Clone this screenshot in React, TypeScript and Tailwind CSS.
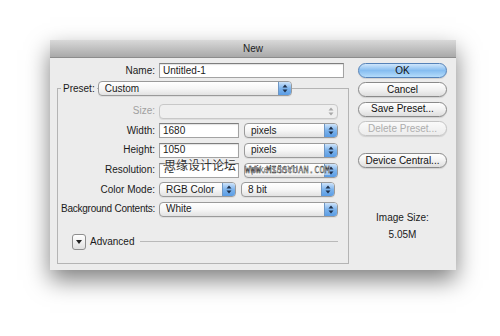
import { ReactNode } from "react";

// Photoshop "New" document dialog, Aqua style

function Arrows({ disabled = false }: { disabled?: boolean }) {
  const fill = disabled ? "#a8a8a8" : "#1d2f4a";
  return (
    <svg width="6" height="9" viewBox="0 0 6 9">
      <path d="M3 0.5 L5.5 3.5 H0.5 Z" fill={fill} />
      <path d="M3 8.5 L5.5 5.5 H0.5 Z" fill={fill} />
    </svg>
  );
}

function Select({ value, width, disabled = false }: { value: string; width: string; disabled?: boolean }) {
  return (
    <div
      className={`flex h-[15px] ${width} overflow-hidden rounded-[4px] border ${
        disabled ? "border-[#c8c8c8] bg-[#efefef]" : "border-[#9a9a9a] bg-linear-to-b from-white via-[#f6f6f6] to-[#e2e2e2]"
      } shadow-[0_1px_0_rgba(0,0,0,0.06)]`}
    >
      <div className="flex flex-1 items-center whitespace-nowrap pl-[6px] leading-none text-[#1a1a1a]">{value}</div>
      <div
        className={`flex w-[13px] items-center justify-center ${
          disabled ? "" : "border-l border-[#6d96c4] bg-linear-to-b from-[#cfe4fa] via-[#7cb3ec] to-[#5a9ce4]"
        }`}
      >
        <Arrows disabled={disabled} />
      </div>
    </div>
  );
}

function Input({ value, width }: { value: string; width: string }) {
  return (
    <div
      className={`flex h-[15px] ${width} items-center border border-[#a3a3a3] border-t-[#7e7e7e] bg-white pl-[3px] leading-none shadow-[inset_0_1px_1px_rgba(0,0,0,0.12)]`}
    >
      {value}
    </div>
  );
}

function Row({ label, children, muted = false, tight = false }: { label: string; children: ReactNode; muted?: boolean; tight?: boolean }) {
  return (
    <div className="flex h-[15px] items-center">
      <div
        className={`flex w-[101px] justify-end whitespace-nowrap pr-[4px] leading-none ${muted ? "text-[#a0a0a0]" : ""} ${
          tight ? "tracking-[-0.25px]" : ""
        }`}
      >
        {label}
      </div>
      <div className="flex gap-[5px]">{children}</div>
    </div>
  );
}

function Button({ label, primary = false, disabled = false, className = "" }: { label: string; primary?: boolean; disabled?: boolean; className?: string }) {
  let look = "border-[#8a8a8a] bg-linear-to-b from-white via-[#f2f2f2] to-[#dedede] text-[#111]";
  if (primary) look = "border-[#5582b8] bg-linear-to-b from-[#cfe6fb] via-[#86bdf0] to-[#b4dcfb] text-[#111]";
  if (disabled) look = "border-[#c4c4c4] bg-linear-to-b from-[#fafafa] to-[#ececec] text-[#adadad]";
  return (
    <div
      className={`flex h-[15px] w-[89px] items-center justify-center rounded-full border leading-none shadow-[0_1px_1px_rgba(0,0,0,0.12)] ${look} ${className}`}
    >
      {label}
    </div>
  );
}

export default function App() {
  return (
    <div className="h-[336px] w-[500px] overflow-hidden bg-white pl-[50px] pt-[40px] font-['Liberation_Sans',Arial,sans-serif] text-[10px] text-[#1a1a1a]">
      <div className="relative h-[230px] w-[406px] bg-[#ececec] shadow-[0_10px_22px_rgba(0,0,0,0.5)]">
        {/* Title bar */}
        <div className="flex h-[18px] items-center justify-center border-b border-[#8c8c8c] bg-linear-to-b from-[#d9d9d9] to-[#a9a9a9] leading-none text-[#222]">
          New
        </div>

        <div className="flex">
          {/* Left column */}
          <div className="w-[299px] pt-[5px]">
            <div className="flex h-[15px] items-center">
              <div className="w-[109px] pr-[4px] text-right leading-none">Name:</div>
              <Input value="Untitled-1" width="w-[185px]" />
            </div>

            <div className="ml-[7px] mt-[10px] h-[176px] w-[292px] border border-[#b4b4b4]">
              <div className="-mt-[8px] ml-[3px] flex h-[15px] items-center">
                <div className="bg-[#ececec] px-[2px] leading-none">Preset:</div>
                <div className="ml-[1px]">
                  <Select value="Custom" width="w-[194px]" />
                </div>
              </div>

              <div className="mt-[7.5px] flex flex-col gap-[4.7px]">
                <Row label="Size:" muted>
                  <Select value="" width="w-[179px]" disabled />
                </Row>
                <Row label="Width:">
                  <Input value="1680" width="w-[80px]" />
                  <Select value="pixels" width="w-[94px]" />
                </Row>
                <Row label="Height:">
                  <Input value="1050" width="w-[80px]" />
                  <Select value="pixels" width="w-[94px]" />
                </Row>
                <Row label="Resolution:">
                  <Input value="72" width="w-[80px]" />
                  <Select value="pixels/inch" width="w-[94px]" />
                </Row>
                <Row label="Color Mode:">
                  <Select value="RGB Color" width="w-[77px]" />
                  <Select value="8 bit" width="w-[94px]" />
                </Row>
                <Row label="Background Contents:" tight>
                  <Select value="White" width="w-[179px]" />
                </Row>
              </div>

              <div className="ml-[14px] mt-[17px] flex h-[16px] items-center">
                <div className="flex h-[16px] w-[14px] items-center justify-center rounded-[3px] border border-[#8e8e8e] bg-linear-to-b from-white to-[#e0e0e0]">
                  <svg width="6" height="4" viewBox="0 0 6 4">
                    <path d="M0 0 H6 L3 4 Z" fill="#222" />
                  </svg>
                </div>
                <div className="ml-[4px] leading-none">Advanced</div>
                <div className="ml-[6px] h-px w-[198px] bg-[#b9b9b9]" />
              </div>
            </div>
          </div>

          {/* Right column */}
          <div className="flex flex-1 flex-col items-center pt-[5px]">
            <Button label="OK" primary />
            <Button label="Cancel" className="mt-[4px]" />
            <Button label="Save Preset..." className="mt-[4.5px]" />
            <Button label="Delete Preset..." disabled className="mt-[4.5px]" />
            <Button label="Device Central..." className="mt-[17px]" />
            <div className="mt-[44px] leading-[12px]">Image Size:</div>
            <div className="mt-[5px] leading-[12px]">5.05M</div>
          </div>
        </div>

        {/* Watermark over the form */}
        <div className="absolute left-[114px] top-[120px] font-['Noto_Sans_CJK_SC',sans-serif] text-[12px] leading-[10px] text-[#333] [text-shadow:0_0_2px_#fff,0_0_2px_#fff]">
          思缘设计论坛
        </div>
        <div className="absolute left-[195px] top-[126px] bg-white/40 font-['DejaVu_Sans_Mono',monospace] text-[8.5px] leading-[9px] tracking-[0.2px] text-white [-webkit-text-stroke:0.4px_#2a2a2a]">
          WWW.MISSYUAN.COM
        </div>
      </div>
    </div>
  );
}
